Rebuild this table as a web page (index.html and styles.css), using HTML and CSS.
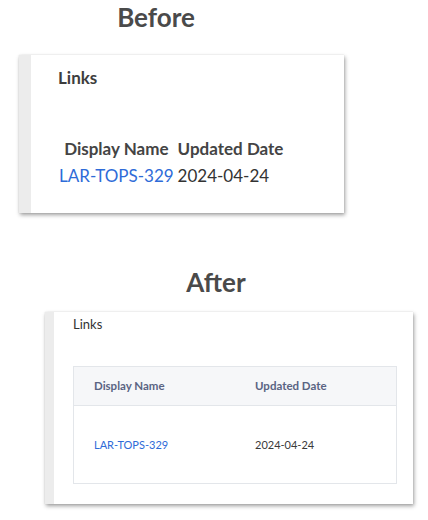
FILE: index.html
```html
<!DOCTYPE html>
<html lang="en">
<head>
<meta charset="utf-8">
<title>Links table before/after</title>
<link rel="stylesheet" href="styles.css">
</head>
<body>
  <main class="page">
    <h1 class="title title-before">Before</h1>
    <section class="card card-before">
      <h2 class="links-before">Links</h2>
      <table class="tbl-before">
        <thead>
          <tr><th>Display Name</th><th>Updated Date</th></tr>
        </thead>
        <tbody>
          <tr><td><a class="link" href="#">LAR-TOPS-329</a></td><td>2024-04-24</td></tr>
        </tbody>
      </table>
    </section>

    <h1 class="title title-after">After</h1>
    <section class="card card-after">
      <h2 class="links-after">Links</h2>
      <table class="tbl-after">
        <thead>
          <tr><th>Display Name</th><th>Updated Date</th></tr>
        </thead>
        <tbody>
          <tr><td><a class="link" href="#">LAR-TOPS-329</a></td><td>2024-04-24</td></tr>
        </tbody>
      </table>
    </section>
  </main>
</body>
</html>
```

FILE: styles.css
```css
html, body {
  margin: 0;
  padding: 0;
  background: #ffffff;
}

body {
  font-family: Lato, "Noto Sans", "Liberation Sans", sans-serif;
  width: 428px;
  height: 520px;
  overflow: hidden;
}

.page {
  display: flex;
  flex-direction: column;
  align-items: flex-start;
}

.title {
  margin: 0;
  font-size: 26px;
  line-height: 31px;
  font-weight: 700;
  color: #4a4a4a;
  text-align: center;
}

.title-before {
  width: 312px;
  padding-top: 2px;
}

.title-after {
  width: 428px;
  box-sizing: border-box;
  padding-left: 4px;
  margin-top: 54px;
}

.card {
  box-sizing: border-box;
  background: #ffffff;
  border-left: 12px solid #ececec;
  box-shadow: 1px 2px 4px rgba(0, 0, 0, 0.38), 0 0 1px rgba(0, 0, 0, 0.12);
}

/* BEFORE */
.card-before {
  margin: 22px 0 0 19px;
  width: 325px;
  height: 158px;
  padding: 13px 0 0 27px;
}

.links-before {
  margin: 0;
  font-size: 17px;
  line-height: 20px;
  font-weight: 700;
  color: #3d3d3d;
}

.tbl-before {
  margin: 46px 0 0 -2px;
  border-spacing: 2px;
  font-size: 17px;
  line-height: 23px;
  color: #333333;
}

.tbl-before th,
.tbl-before td {
  padding: 1px;
}

.tbl-before th {
  font-weight: 700;
  color: #444444;
  text-align: center;
}

.tbl-before td {
  text-align: left;
}

.link {
  color: #2e6bd8;
  text-decoration: none;
}

/* AFTER */
.card-after {
  margin: 14px 0 0 45px;
  width: 368px;
  border-left-width: 9px;
  padding: 4px 16px 20px 19px;
}

.links-after {
  margin: 0;
  font-size: 13px;
  line-height: 16px;
  font-weight: 400;
  color: #333333;
}

.tbl-after {
  margin-top: 34px;
  width: 324px;
  table-layout: fixed;
  border: 1px solid #e3e6ea;
  border-spacing: 0;
}

.tbl-after th,
.tbl-after td {
  padding: 0 20px;
  text-align: left;
}

.tbl-after th {
  font-size: 11.5px;
  line-height: 38px;
  background: #f6f7f9;
  border-bottom: 1px solid #e3e6ea;
  font-weight: 700;
  color: #5a6483;
}

.tbl-after td {
  font-size: 11px;
  line-height: 77px;
  color: #3a3a3a;
}
```
